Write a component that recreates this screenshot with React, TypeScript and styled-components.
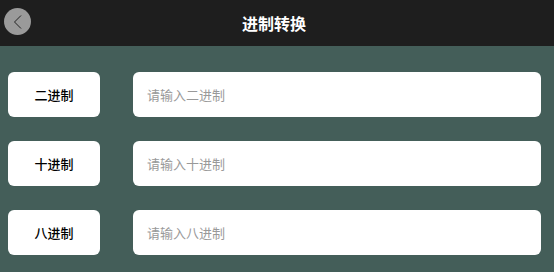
import React from "react";
import styled, { createGlobalStyle } from "styled-components";

const rows = [
  { label: "二进制", placeholder: "请输入二进制" },
  { label: "十进制", placeholder: "请输入十进制" },
  { label: "八进制", placeholder: "请输入八进制" },
];

const App = () => {
  return (
    <Page>
      <GlobalStyle />
      <Header>
        <BackBtn>
          <svg width="14" height="16" viewBox="0 0 14 16">
            <path d="M10 1.5 L3.5 8 L10 14.5" fill="none" stroke="#222" strokeWidth="1" />
          </svg>
        </BackBtn>
        <Title>进制转换</Title>
      </Header>
      <Body>
        {rows.map((r) => (
          <Row key={r.label}>
            <Label>{r.label}</Label>
            <Input placeholder={r.placeholder} />
          </Row>
        ))}
      </Body>
    </Page>
  );
};

export default App;

const GlobalStyle = createGlobalStyle`
  html, body {
    margin: 0;
    padding: 0;
    background: #445e59;
  }
  * {
    box-sizing: border-box;
  }
`;

const Page = styled.div`
  width: 554px;
  height: 272px;
  background: #445e59;
  font-family: "Noto Sans CJK SC", "Noto Sans", sans-serif;
`;

const Header = styled.div`
  position: relative;
  height: 46px;
  background: #1e1e1e;
  display: flex;
  align-items: center;
  justify-content: center;
`;

const BackBtn = styled.div`
  position: absolute;
  left: 4px;
  top: 8px;
  width: 27px;
  height: 27px;
  border-radius: 50%;
  background: #9a9a9a;
  display: flex;
  justify-content: center;
  align-items: center;
  cursor: pointer;
`;

const Title = styled.div`
  color: #fff;
  font-size: 16px;
  font-weight: 700;
  margin-left: -6px;
`;

const Body = styled.div`
  display: flex;
  flex-direction: column;
  gap: 24px;
  padding: 26px 13px 0 8px;
`;

const Row = styled.div`
  display: flex;
  gap: 33px;
  height: 45px;
`;

const Label = styled.div`
  width: 92px;
  background: #fff;
  border-radius: 6px;
  display: flex;
  justify-content: center;
  align-items: center;
  font-size: 13px;
  font-weight: 500;
  color: #000;
`;

const Input = styled.input`
  flex: 1;
  border: none;
  outline: none;
  background: #fff;
  border-radius: 6px;
  padding: 0 14px;
  font-family: inherit;
  font-size: 13px;
  color: #333;
  &::placeholder {
    color: #999;
  }
`;
